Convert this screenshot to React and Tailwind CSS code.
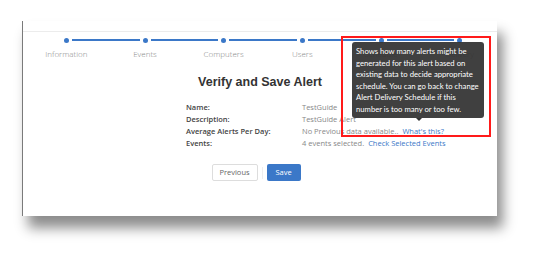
import React from 'react'

const steps = ['Information', 'Events', 'Computers', 'Users', 'Schedule', 'Delivery']

const rows = [
  { label: 'Name:', value: 'TestGuide' },
  { label: 'Description:', value: 'TestGuide Alert' },
  { label: 'Average Alerts Per Day:', value: 'No Previous data available..', link: "What's this?" },
  { label: 'Events:', value: '4 events selected.', link: 'Check Selected Events' },
]

const tipLines = [
  'Shows how many alerts might be',
  'generated for this alert based on',
  'existing data to decide appropriate',
  'schedule. You can go back to change',
  'Alert Delivery Schedule if this',
  'number is too many or too few.',
]

function Stepper() {
  return (
    <div className="ml-[4px] grid w-[472px] grid-cols-6 pt-[5px]">
      {steps.map((s, i) => (
        <div key={s} className="flex flex-col items-center">
          <div className="flex h-[6px] w-full items-center">
            <div className={`h-[2px] flex-1 mr-[3px] ${i === 0 ? 'bg-transparent' : 'bg-[#3b78c8]'}`} />
            <div className="h-[5px] w-[5px] rounded-full bg-[#3b78c8]" />
            <div className={`h-[2px] flex-1 ml-[3px] ${i === steps.length - 1 ? 'bg-transparent' : 'bg-[#3b78c8]'}`} />
          </div>
          <div className="mt-[6px] text-[8px] leading-[10px] font-light text-[#888]">{s}</div>
        </div>
      ))}
    </div>
  )
}

export default function App() {
  return (
    <div className="relative h-[258px] w-[539px] overflow-hidden bg-white pl-[22px] pt-[21px]" style={{ fontFamily: '"Open Sans", "Noto Sans", sans-serif' }}>
      <div className="h-[195px] w-[475px] border-l border-[#7a7a7a] bg-white shadow-[6px_12px_12px_rgba(0,0,0,0.45)]">
        <div className="h-[11px] border-b border-[#ececec]" />
        <Stepper />
        <h1 className="mt-[16px] text-center text-[12.5px] font-bold leading-[14px] text-[#333]" style={{ fontFamily: '"Liberation Sans", Arial, sans-serif' }}>
          Verify and Save Alert
        </h1>
        <div className="ml-[163px] mt-[12px] flex flex-col text-[7.5px] leading-[12px]">
          {rows.map((r) => (
            <div key={r.label} className="flex">
              <div className="w-[116px] font-semibold text-[#444]">{r.label}</div>
              <div className="text-[#888]">
                {r.value}
                {r.link && <span className="ml-[4px] text-[#3b78c8]">{r.link}</span>}
              </div>
            </div>
          ))}
        </div>
        <div className="mt-[15px] flex items-center justify-center gap-[4px] pr-[8px]">
          <button className="h-[17px] w-[46px] rounded-[2px] border border-[#dddddd] bg-white text-[7.5px] text-[#666]">Previous</button>
          <div className="h-[12px] w-px bg-[#eeeeee]" />
          <button className="h-[17px] w-[34px] rounded-[2px] bg-[#3b78c8] text-[7.5px] text-white">Save</button>
        </div>
      </div>

      <div className="absolute left-[352px] top-[42px] w-[132px] rounded-[3px] bg-[rgba(50,50,50,0.93)] pl-[4px] pt-[4px] pb-[3px] text-[7.7px] leading-[11.5px] text-white" style={{ fontFamily: 'Lato, "Open Sans", sans-serif' }}>
        {tipLines.map((l) => (
          <div key={l} className="whitespace-nowrap">{l}</div>
        ))}
        <div className="absolute bottom-[-3px] left-[64px] h-0 w-0 border-x-[3px] border-t-[3px] border-x-transparent border-t-[#333]" />
      </div>

      <div className="absolute left-[341px] top-[36px] h-[101px] w-[150px] border-2 border-[#ff1a1a]" />
    </div>
  )
}
